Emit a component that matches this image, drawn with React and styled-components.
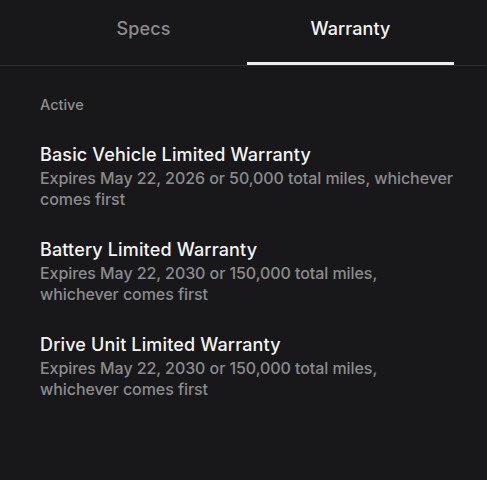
import styled, { createGlobalStyle } from 'styled-components'

const GlobalStyle = createGlobalStyle`
  html, body {
    margin: 0;
    padding: 0;
    background: #18181a;
  }
  body {
    font-family: Inter, "Noto Sans", sans-serif;
    -webkit-font-smoothing: antialiased;
  }
`

const warranties = [
  {
    title: 'Basic Vehicle Limited Warranty',
    detail: 'Expires May 22, 2026 or 50,000 total miles, whichever comes first',
  },
  {
    title: 'Battery Limited Warranty',
    detail: 'Expires May 22, 2030 or 150,000 total miles, whichever comes first',
  },
  {
    title: 'Drive Unit Limited Warranty',
    detail: 'Expires May 22, 2030 or 150,000 total miles, whichever comes first',
  },
]

const Page = styled.div`
  width: 487px;
  height: 480px;
  background: #18181a;
  overflow: hidden;
`

const TabBar = styled.div`
  display: grid;
  grid-template-columns: 1fr 1fr;
  padding: 0 33px 0 40px;
  border-bottom: 1px solid #2e2e30;
`

const Tab = styled.div`
  height: 65px;
  display: flex;
  align-items: center;
  justify-content: center;
  padding-bottom: 6px;
  box-sizing: border-box;
  font-size: 18px;
  font-weight: 500;
  letter-spacing: 0.1px;
  color: ${p => (p.$active ? '#f4f4f4' : '#8b8b8d')};
  border-bottom: 3px solid ${p => (p.$active ? '#eeeeee' : 'transparent')};
`

const Content = styled.div`
  padding: 29px 30px 0 40px;
`

const SectionLabel = styled.div`
  font-size: 14.5px;
  font-weight: 500;
  color: #8e8e90;
  line-height: 20px;
  margin-bottom: 27px;
`

const List = styled.div`
  display: flex;
  flex-direction: column;
  gap: 27px;
`

const Item = styled.div`
  display: flex;
  flex-direction: column;
`

const Title = styled.div`
  font-size: 18px;
  font-weight: 500;
  letter-spacing: 0.15px;
  color: #f4f4f4;
  line-height: 26px;
`

const Detail = styled.div`
  font-size: 16px;
  font-weight: 500;
  letter-spacing: -0.07px;
  color: #8b8b8d;
  line-height: 21px;
`

export default function App() {
  return (
    <Page>
      <GlobalStyle />
      <TabBar>
        <Tab>Specs</Tab>
        <Tab $active>Warranty</Tab>
      </TabBar>
      <Content>
        <SectionLabel>Active</SectionLabel>
        <List>
          {warranties.map(w => (
            <Item key={w.title}>
              <Title>{w.title}</Title>
              <Detail>{w.detail}</Detail>
            </Item>
          ))}
        </List>
      </Content>
    </Page>
  )
}
